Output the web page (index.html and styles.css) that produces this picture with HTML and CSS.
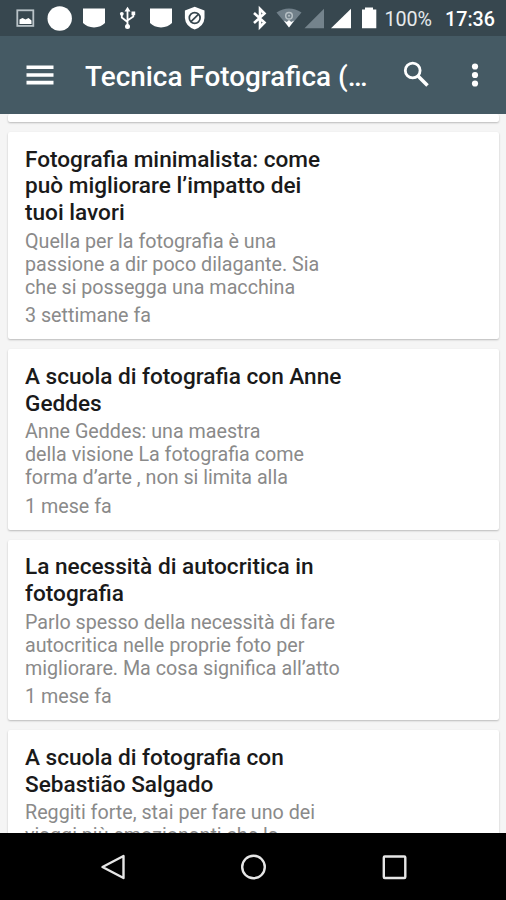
FILE: index.html
```html
<!DOCTYPE html>
<html lang="it">
<head>
    <meta charset="UTF-8">
    <meta name="viewport" content="width=device-width, initial-scale=1.0">
    <title>Tecnica Fotografica</title>
    <link rel="stylesheet" href="styles.css">
</head>
<body>
    <div class="status">
        <svg class="status-icons" width="506" height="36" viewBox="0 0 506 36" fill="#fff">
            <!-- picture -->
            <rect x="17.3" y="10.3" width="16" height="15.6" fill="none" stroke="#b9c3c8" stroke-width="1.8"/>
            <path d="M19.500 24v-4.500l3-1.500 3 1.500 3-1.500 3 2.500v3.500z"/>
            <circle cx="59.700" cy="18.500" r="12.200"/>
            <path d="M83 8.500h22v14.500q-4 4-11 4.500q-7-.5-11-4.500z"/>
            <!-- usb -->
            <path d="M127.500 9v17M121.800 14v3.500l5.700 4.500M133.300 13v3.500l-5.800 4" fill="none" stroke="#fff" stroke-width="1.800"/>
            <path d="M124.500 11.500l3-4.700 3 4.700z"/>
            <circle cx="127.500" cy="26.500" r="2.500"/>
            <circle cx="121.800" cy="13.800" r="1.900"/>
            <rect x="131.500" y="11.500" width="3.700" height="3.700"/>
            <path d="M150 8.500h22v14.500q-4 4-11 4.500q-7-.5-11-4.500z"/>
            <!-- shield -->
            <path d="M194.700 6.800l9.800 3.600v7.600q-.5 8-9.800 11.600q-9.300-3.600-9.800-11.600v-7.600z"/>
            <g fill="none" stroke="#37474f" stroke-width="1.700">
                <circle cx="194.700" cy="18" r="5.400"/>
                <path d="M190.800 21.800l7.800-7.600"/>
            </g>
            <!-- bluetooth -->
            <path d="M254 13l10.500 9.500-4.500 4.500v-18l4.500 4.500-10.500 9.500" fill="none" stroke="#fff" stroke-width="2.600"/>
            <!-- wifi -->
            <path d="M276.500 12.500q12.500-8 25 0L289 27.500z" fill="#71808a"/>
            <path d="M283.800 20.500l3 1.500 2.200-2 2.200 2 3-1.500L289 27.500z"/>
            <circle cx="289" cy="15.700" r="3.300" fill="none" stroke="#b7c0c5" stroke-width="1.500"/>
            <circle cx="289" cy="15.700" r="1" fill="#b7c0c5"/>
            <!-- signal -->
            <path d="M304.500 28.300L324 8.800v19.500z" fill="#74838c"/>
            <path d="M331 28.300L351 8.800v19.500z"/>
            <!-- battery -->
            <path d="M362 9.500h3v-2h8v2h3.300v18.800H362z"/>
        </svg>
        <span class="battery">100%</span>
        <span class="clock">17:36</span>
    </div>
    <header class="toolbar">
        <svg class="menu" width="28" height="20" viewBox="0 0 28 20" fill="#fff">
            <path d="M.5.5h27v3.600H.5zM.5 8.200h27v3.600H.5zM.5 15.800h27v3.600H.5z"/>
        </svg>
        <h1>Tecnica Fotografica (…</h1>
        <svg class="search" width="26" height="26" viewBox="0 0 26 26" fill="none" stroke="#fff">
            <circle cx="9.700" cy="9.500" r="7.400" stroke-width="2.800"/>
            <path d="M15 15l9.500 9.500" stroke-width="3.600"/>
        </svg>
        <svg class="more" width="8" height="24" viewBox="0 0 8 24" fill="#fff">
            <circle cx="4" cy="3.500" r="3.100"/>
            <circle cx="4" cy="12" r="3.100"/>
            <circle cx="4" cy="20.500" r="3.100"/>
        </svg>
    </header>
    <main class="list">
        <div class="card previous"></div>
        <article class="card">
            <h2>Fotografia minimalista: come<br>può migliorare l’impatto dei<br>tuoi lavori</h2>
            <p class="desc">Quella per la fotografia è una<br>passione a dir poco dilagante. Sia<br>che si possegga una macchina</p>
            <p class="date">3 settimane fa</p>
        </article>
        <article class="card">
            <h2>A scuola di fotografia con Anne<br>Geddes</h2>
            <p class="desc">Anne Geddes: una maestra<br>della visione La fotografia come<br>forma d’arte , non si limita alla</p>
            <p class="date">1 mese fa</p>
        </article>
        <article class="card">
            <h2>La necessità di autocritica in<br>fotografia</h2>
            <p class="desc">Parlo spesso della necessità di fare<br>autocritica nelle proprie foto per<br>migliorare. Ma cosa significa all’atto</p>
            <p class="date">1 mese fa</p>
        </article>
        <article class="card">
            <h2>A scuola di fotografia con<br>Sebastião Salgado</h2>
            <p class="desc">Reggiti forte, stai per fare uno dei<br>viaggi più emozionanti che la</p>
        </article>
    </main>
    <nav class="navbar">
        <svg width="26" height="26" viewBox="0 0 26 26"><path d="M2.500 13L23.500 2v22z"/></svg>
        <svg width="26" height="26" viewBox="0 0 26 26"><circle cx="13.500" cy="13" r="11.300"/></svg>
        <svg width="26" height="26" viewBox="0 0 26 26"><rect x="2.800" y="2.500" width="21.500" height="21.500" rx="1"/></svg>
    </nav>
</body>
</html>
```

FILE: styles.css
```css
* {
    box-sizing: border-box;
}
body {
    margin: 0;
    height: 900px;
    display: flex;
    flex-direction: column;
    overflow: hidden;
    font-family: Roboto, sans-serif;
    background-color: #f5f5f5;
}
h1, h2, p {
    margin: 0;
    font-weight: 400;
    white-space: nowrap;
}
.status {
    position: relative;
    flex: none;
    height: 36px;
    display: flex;
    align-items: center;
    justify-content: flex-end;
    gap: 13px;
    padding: 2px 11px 0 0;
    background-color: #37474f;
    color: #fff;
    font-size: 19.7px;
}
/* icons sit behind the battery and clock text */
.status-icons {
    position: absolute;
    left: 0;
    top: 0;
}
.battery {
    color: #e6eaec;
}
.clock {
    font-weight: 500;
}
.toolbar {
    flex: none;
    height: 78px;
    display: flex;
    align-items: center;
    padding: 0 26px;
    background-color: #455a64;
    color: #fff;
}
.toolbar h1 {
    width: 318px;
    margin-left: 31px;
    padding-top: 2px;
    font-size: 27.9px;
    font-weight: 500;
}
.search {
    margin-bottom: 2px;
}
.more {
    margin-left: 42px;
}
.list {
    flex: 1;
    min-height: 0;
    overflow: hidden;
    padding: 0 7px 0 8px;
}
.card {
    margin-bottom: 10px;
    padding: 14.7px 17px 11.3px;
    background-color: #fff;
    border-radius: 2px;
    box-shadow: 0 1px 2px rgba(0, 0, 0, 0.24);
}
.card.previous {
    height: 8px;
    padding: 0;
}
.card h2 {
    font-size: 22.6px;
    line-height: 26.7px;
    font-weight: 500;
    color: #1a1a1a;
}
.desc, .date {
    margin-top: 4px;
    font-size: 19.7px;
    line-height: 22.9px;
    color: #8a8a8a;
}
.date {
    margin-top: 5.5px;
}
.navbar {
    flex: none;
    height: 67px;
    display: flex;
    align-items: center;
    justify-content: center;
    gap: 114.5px;
    background-color: #000;
}
.navbar svg {
    fill: none;
    stroke: #e6e6e6;
    stroke-width: 2.4;
    stroke-linejoin: round;
}
```
